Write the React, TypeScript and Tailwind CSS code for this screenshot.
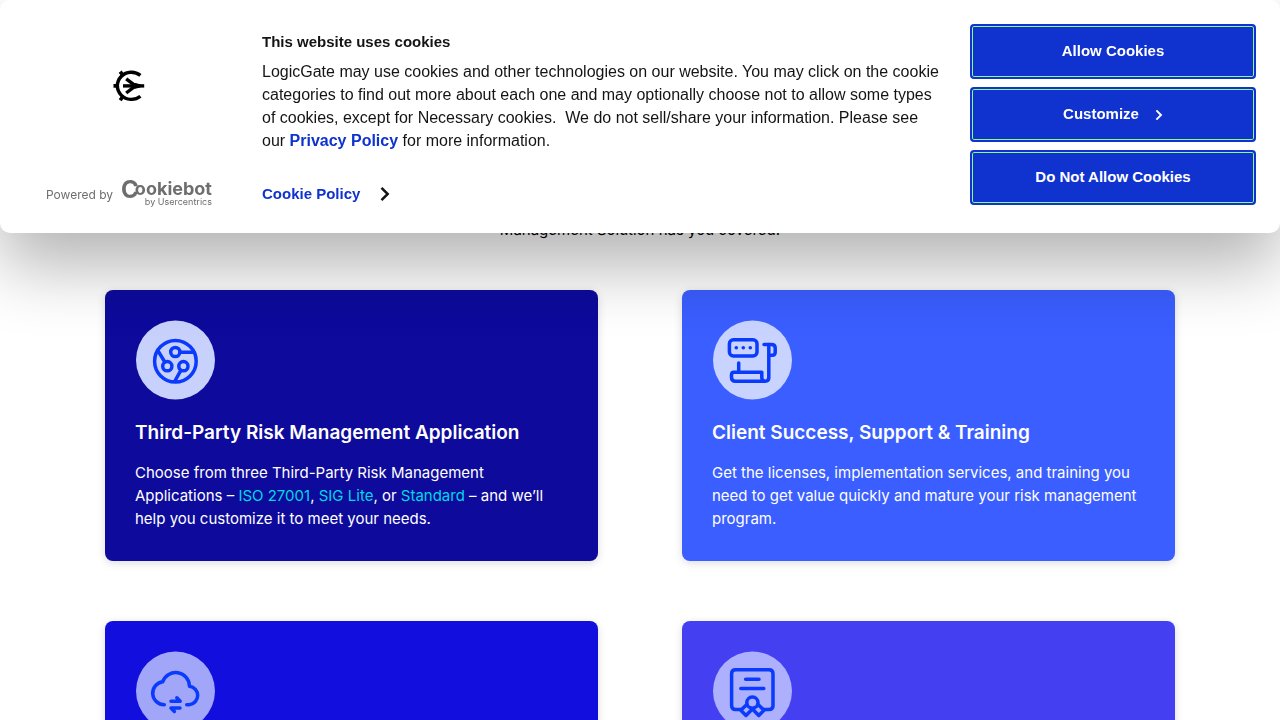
import type { ReactNode } from "react";

function VendorIcon() {
  return (
    <g>
      <circle cx="40.4" cy="41.3" r="20.8" />
      <circle cx="40.3" cy="32" r="4.6" />
      <path d="M45 32.2H59" />
      <circle cx="32.3" cy="46.2" r="4.6" />
      <path d="M29.8 42L22.6 30.2" />
      <circle cx="48.4" cy="46.2" r="4.6" />
      <path d="M46 50.2L40.2 60.5" />
    </g>
  );
}

function TrainingIcon() {
  return (
    <g>
      <rect x="17.4" y="19.8" width="27.6" height="16.2" rx="4" />
      <g fill="#0a3afc" stroke="none">
        <circle cx="24.3" cy="27.8" r="1.8" />
        <circle cx="31.3" cy="27.8" r="1.8" />
        <circle cx="38.3" cy="27.8" r="1.8" />
      </g>
      <path d="M52 24.4H59.4Q63.2 24.4 63.2 28V32.2Q63.2 35.2 60.2 35.2H57.4" />
      <path d="M56.8 24.4V57.6Q56.8 61.2 53.3 61.2H23.5Q19.5 61.2 19.5 57.2V54.8Q19.5 52.2 22 52.2H49.8V57.6Q49.8 61.2 53.3 61.2" />
      <path d="M26.7 43V51.5" />
    </g>
  );
}

function CloudIcon() {
  return (
    <g>
      <path d="M29.3 53.7A11.5 11.5 0 0 1 27.7 30.8A13.8 13.8 0 0 1 54.5 35.2A9.3 9.3 0 0 1 54.2 53.7H51.7" />
      <path d="M36 50.2H45.2L41.8 46.8" />
      <path d="M45 57H36L39.4 60.4" />
    </g>
  );
}

function CertificateIcon() {
  return (
    <g>
      <path d="M28.6 58.6H23.6Q19.6 58.6 19.6 54.6V22.8Q19.6 18.8 23.6 18.8H57Q61 18.8 61 22.8V54.6Q61 58.6 57 58.6H52" />
      <path d="M33.6 28.3H47M28.8 37.4H51.8" />
      <circle cx="40.4" cy="51.6" r="5.6" />
      <path d="M34.8 53.4L28.8 59.2L34 64.4L40.4 58" />
      <path d="M46 53.4L52 59.2L46.8 64.4L40.4 58" />
    </g>
  );
}

function Card({ tone, disc, icon, title, children }: {
  tone: string;
  disc: string;
  icon: ReactNode;
  title?: string;
  children?: ReactNode;
}) {
  return (
    <article className={`min-h-[271px] rounded-lg p-[30px] text-white shadow-[0_2px_8px_rgba(0,0,0,0.14)] ${tone}`}>
      <svg viewBox="0 0 80 80" className="size-20" fill="none" stroke="#0a3afc" strokeWidth="3.5" strokeLinecap="round" strokeLinejoin="round" aria-hidden="true">
        <circle cx="40.5" cy="40" r="39.5" className={disc} stroke="none" />
        {icon}
      </svg>
      {title && <h2 className="mt-5 text-[19px] leading-[26px] font-semibold">{title}</h2>}
      {children && <p className="mt-[15px] text-[15px] leading-[23px]">{children}</p>}
    </article>
  );
}

function Chevron({ className }: { className: string }) {
  return (
    <svg viewBox="0 0 10 16" className={className} fill="none" stroke="currentColor" strokeWidth="2.5" aria-hidden="true">
      <path d="M1.5 1.8L7.7 8L1.5 14.2" />
    </svg>
  );
}

const consentButton =
  "flex h-[55px] w-full items-center justify-center rounded border-2 border-[#1032cf] bg-[#1032cf] text-[15px] font-bold text-white shadow-[inset_0_0_0_1px_#8cfb92]";

function CookieBanner() {
  return (
    <section
      aria-label="Cookie consent"
      className="fixed inset-x-0 top-0 z-10 flex gap-6 rounded-[10px] bg-white p-6 font-['Liberation_Sans',Arial,sans-serif] text-[#141414] shadow-[0_32px_68px_rgba(0,0,0,0.3)]"
    >
      <div className="flex w-[214px] shrink-0 flex-col items-center justify-between pr-1 pb-0.5">
        <svg viewBox="0 0 32 32" className="mt-[46px] size-8" fill="none" stroke="#000" aria-label="LogicGate" role="img">
          <path d="M27.4 5.4A14 13.6 0 1 0 27.4 26.2" strokeWidth="3.4" />
          <path d="M0.5 15.9H5M7.2 1.6L9.6 5M7.2 30.2L9.6 26.8" strokeWidth="3.6" />
          <path d="M10 15.9H31.2" strokeWidth="3.4" />
          <path d="M13.2 8.8L20.5 14.4L27 15.9L20.5 17.4L13.2 23" strokeWidth="3.4" />
          <path d="M18 12.6L26 14.2V17.6L18 19.2Z" fill="#000" stroke="none" />
        </svg>
        <a href="#cookiebot" className="flex items-center gap-2 font-['Inter',sans-serif] text-[#6e6e6e]">
          <span className="pt-1 text-xs">Powered by</span>
          <span className="flex flex-col items-end">
            <span className="flex items-center font-bold">
              <span className="-mr-1 pt-0.5 text-2xl leading-[18px]">C</span>
              <span className="text-lg leading-5">ookiebot</span>
            </span>
            <span className="-mt-0.5 text-[9px] leading-[10px]">by Usercentrics</span>
          </span>
        </a>
      </div>

      <div className="min-w-0 flex-1 pt-1.5 pb-[3px]">
        <h2 className="text-[15px] leading-6 font-bold">This website uses cookies</h2>
        <p className="mt-1.5 max-w-[680px] text-base leading-[23px]">
          LogicGate may use cookies and other technologies on our website. You may click on the cookie
          categories to find out more about each one and may optionally choose not to allow some types
          of cookies, except for Necessary cookies.&nbsp; We do not sell/share your information. Please see
          our <a href="#privacy" className="font-bold text-[#1032cf]">Privacy Policy</a> for more information.
        </p>
        <a href="#cookie-policy" className="mt-[30px] flex items-center gap-5 text-[15px] leading-6 font-bold text-[#1032cf]">
          Cookie Policy
          <Chevron className="h-4 w-2.5 text-[#141414]" />
        </a>
      </div>

      <div className="flex w-[286px] shrink-0 flex-col gap-2">
        <button type="button" className={consentButton}>Allow Cookies</button>
        <button type="button" className={`${consentButton} gap-4`}>
          Customize
          <Chevron className="h-3 w-2 text-white" />
        </button>
        <button type="button" className={consentButton}>Do Not Allow Cookies</button>
      </div>
    </section>
  );
}

export default function App() {
  return (
    <div className="h-screen overflow-hidden bg-white font-['Inter',sans-serif] text-black">
      <CookieBanner />
      <main className="mx-auto max-w-[1070px] pt-[218px]">
        <p className="text-center text-[15px] leading-[23px]">Management Solution has you covered.</p>
        <div className="mt-[49px] grid grid-cols-2 gap-x-[84px] gap-y-[60px]">
          <Card tone="bg-[#0d0a9c]" disc="fill-[#c8d1fc]" icon={<VendorIcon />} title="Third-Party Risk Management Application">
            Choose from three Third-Party Risk Management Applications –{" "}
            <a href="#iso" className="text-[#00d9e0]">ISO 27001</a>,{" "}
            <a href="#sig" className="text-[#00d9e0]">SIG Lite</a>, or{" "}
            <a href="#standard" className="text-[#00d9e0]">Standard</a> – and we’ll help you customize it to meet your needs.
          </Card>
          <Card tone="bg-[#3a5eff]" disc="fill-[#c9d3ff]" icon={<TrainingIcon />} title="Client Success, Support & Training">
            Get the licenses, implementation services, and training you need to get value quickly and mature your risk management program.
          </Card>
          <Card tone="bg-[#120edd]" disc="fill-[#a1a6f8]" icon={<CloudIcon />} />
          <Card tone="bg-[#4440f1]" disc="fill-[#adb0fc]" icon={<CertificateIcon />} />
        </div>
      </main>
    </div>
  );
}
